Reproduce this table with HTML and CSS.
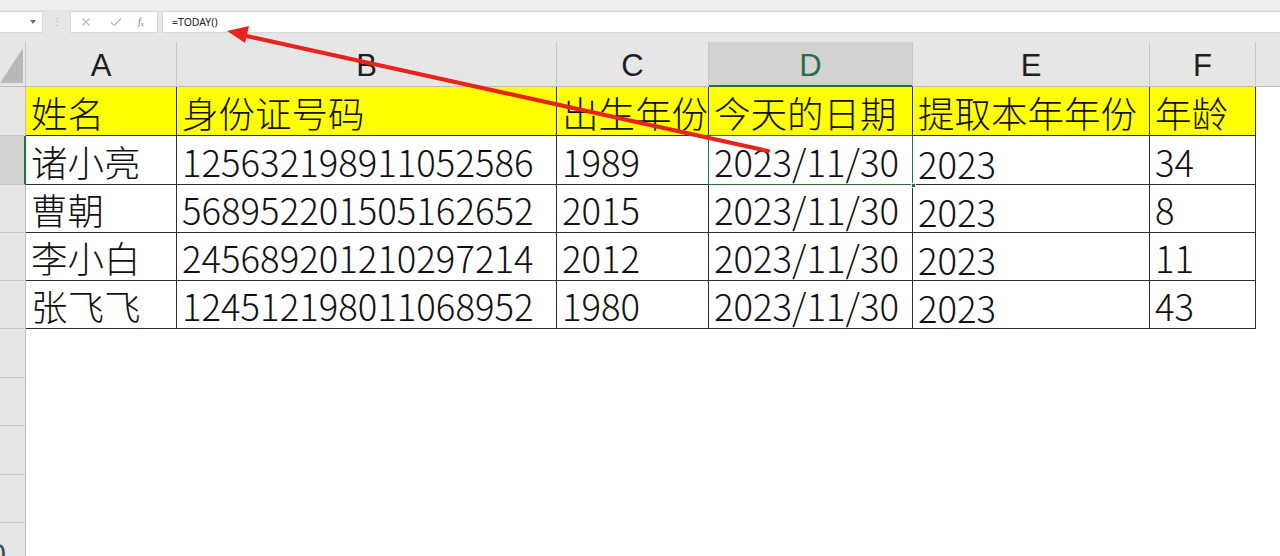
FILE: index.html
```html
<!DOCTYPE html>
<html lang="zh">
<head>
<meta charset="utf-8">
<link rel="stylesheet" href="styles.css">
</head>
<body>
<div class="app">
  <div class="fbar">
    <div class="namebox"><span class="caret"></span></div>
    <div class="dots">⋮</div>
    <div class="btns">
      <svg class="ico" width="10" height="10" viewBox="0 0 10 10"><path d="M1.5 1.5 L8.5 8.5 M8.5 1.5 L1.5 8.5" stroke="#b8b8b8" stroke-width="1.1" fill="none"/></svg>
      <svg class="ico" width="12" height="10" viewBox="0 0 12 10"><path d="M1 5.5 L4.3 8.5 L11 1.5" stroke="#b8b8b8" stroke-width="1.1" fill="none"/></svg>
      <span class="fx">f<sub>x</sub></span>
    </div>
    <div class="formula">=TODAY()</div>
  </div>

  <div class="sheet">
    <div class="corner"><svg width="25" height="45" viewBox="0 0 25 45"><polygon points="0,41 23,41 23,6" fill="#b9b9b9"/></svg></div>
    <div class="ch">A</div>
    <div class="ch">B</div>
    <div class="ch">C</div>
    <div class="ch ch-sel">D</div>
    <div class="ch">E</div>
    <div class="ch">F</div>
    <div class="ch ch-rest"></div>

    <div class="rh"></div>
    <div class="c y">姓名</div>
    <div class="c y">身份证号码</div>
    <div class="c y">出生年份</div>
    <div class="c y">今天的日期</div>
    <div class="c y">提取本年年份</div>
    <div class="c y">年龄</div>
    <div class="e"></div>

    <div class="rh rh-sel"></div>
    <div class="c">诸小亮</div>
    <div class="c">125632198911052586</div>
    <div class="c">1989</div>
    <div class="c sel">2023/11/30<span class="handle"></span></div>
    <div class="c low">2023</div>
    <div class="c">34</div>
    <div class="e"></div>

    <div class="rh"></div>
    <div class="c">曹朝</div>
    <div class="c">568952201505162652</div>
    <div class="c">2015</div>
    <div class="c">2023/11/30</div>
    <div class="c low">2023</div>
    <div class="c">8</div>
    <div class="e"></div>

    <div class="rh"></div>
    <div class="c">李小白</div>
    <div class="c">245689201210297214</div>
    <div class="c">2012</div>
    <div class="c">2023/11/30</div>
    <div class="c low">2023</div>
    <div class="c">11</div>
    <div class="e"></div>

    <div class="rh"></div>
    <div class="c">张飞飞</div>
    <div class="c">124512198011068952</div>
    <div class="c">1980</div>
    <div class="c">2023/11/30</div>
    <div class="c low">2023</div>
    <div class="c">43</div>
    <div class="e"></div>

    <div class="rh"></div><div class="blank"></div>
    <div class="rh"></div><div class="blank"></div>
    <div class="rh"></div><div class="blank"></div>
    <div class="rh"></div><div class="blank"></div>
    <div class="rh rh-num"><span>10</span></div><div class="blank"></div>
  </div>

  <svg class="arrow" width="1280" height="556" viewBox="0 0 1280 556">
    <line x1="768" y1="151" x2="242" y2="35" stroke="#e8231d" stroke-width="4" stroke-linecap="round"/>
    <polygon points="227,31 249,26 245,43" fill="#e8231d"/>
  </svg>
</div>
</body>
</html>
```

FILE: styles.css
```css
* { box-sizing: border-box; }
html, body { margin: 0; padding: 0; background: #ffffff; }
body { width: 1280px; height: 556px; overflow: hidden; }

.app {
  position: relative;
  width: 1280px;
  height: 556px;
  overflow: hidden;
}

/* formula bar */
.fbar {
  height: 42px;
  background: #e6e6e6;
  border-top: 10px solid #efefef;
  display: flex;
  align-items: flex-start;
  padding-top: 1px;
}
.namebox {
  width: 43px;
  height: 22px;
  background: #fff;
  border: 1px solid #d8d8d8;
  border-left: none;
  position: relative;
}
.caret {
  position: absolute;
  right: 6px;
  top: 8px;
  width: 0;
  height: 0;
  border-left: 3px solid transparent;
  border-right: 3px solid transparent;
  border-top: 4px solid #6f6f6f;
}
.dots {
  width: 27px;
  height: 22px;
  text-align: center;
  font: 10px/22px "Liberation Sans", sans-serif;
  color: #a8a8a8;
}
.btns {
  width: 88px;
  height: 22px;
  background: #fff;
  border: 1px solid #d8d8d8;
  display: flex;
  align-items: center;
  padding-left: 10px;
}
.btns .ico { margin-right: 19px; }
.btns .ico + .ico { margin-right: 16px; }
.fx {
  font: italic 10px "Liberation Serif", serif;
  color: #7a7a7a;
}
.fx sub { font-size: 7px; vertical-align: -1px; }
.formula {
  margin-left: 4px;
  flex: 1;
  height: 22px;
  background: #fff;
  border: 1px solid #d8d8d8;
  border-right: none;
  padding-left: 9px;
  font: 10.5px/20px "Noto Sans", "Liberation Sans", sans-serif;
  color: #222;
}

/* sheet */
.sheet {
  display: grid;
  grid-template-columns: 26px 151px 380px 152px 204px 237px 106px 1fr;
  grid-template-rows: 45px 49px 49px 48px 48px 48px 49px 48px 49px 48px 49px;
}
.corner {
  background: #e6e6e6;
  border-right: 1px solid #c8c8c8;
  border-bottom: 1px solid #bdbdbd;
  overflow: hidden;
}
.corner svg { display: block; }
.ch {
  background: #e6e6e6;
  border-right: 1px solid #c8c8c8;
  border-bottom: 1px solid #bdbdbd;
  display: flex;
  align-items: center;
  justify-content: center;
  padding-top: 4px;
  font: 31px "Liberation Sans", "Noto Sans", sans-serif;
  color: #1e1e1e;
}
.ch-sel {
  background: #d3d3d3;
  color: #217346;
  border-bottom: 2px solid #217346;
}
.ch-rest { border-right: none; }

.rh {
  background: #e6e6e6;
  border-right: 1px solid #bcbcbc;
  border-bottom: 1px solid #c8c8c8;
}
.rh-sel {
  background: #d3d3d3;
  border-right: 2px solid #217346;
}
.rh-num {
  display: flex;
  justify-content: flex-end;
  align-items: flex-end;
  overflow: hidden;
  border-bottom: none;
}
.rh-num span {
  font: 30px/1 "Liberation Sans", sans-serif;
  color: #3c4a5e;
  margin-right: 19px;
  margin-bottom: 3px;
}

.c {
  position: relative;
  border-right: 1px solid #2e2e2e;
  border-bottom: 1px solid #2e2e2e;
  display: flex;
  align-items: center;
  padding: 3px 0 0 5px;
  font: 300 36.5px/40px "Noto Sans CJK SC", "Noto Sans", sans-serif;
  color: #111;
  white-space: nowrap;
}
.c.y { background: #ffff00; }
.c.low { padding-top: 7px; }
.c.sel::after {
  content: "";
  position: absolute;
  left: -1px;
  top: -1px;
  right: -1px;
  bottom: -1px;
  border: 1.5px solid #217346;
  pointer-events: none;
}
.handle {
  position: absolute;
  right: -4px;
  bottom: -4px;
  width: 5px;
  height: 5px;
  background: #217346;
  border: 1px solid #fff;
  z-index: 2;
}
.e { background: #fff; }
.blank { grid-column: 2 / 9; background: #fff; }

.arrow {
  position: absolute;
  left: 0;
  top: 0;
  pointer-events: none;
}
```
